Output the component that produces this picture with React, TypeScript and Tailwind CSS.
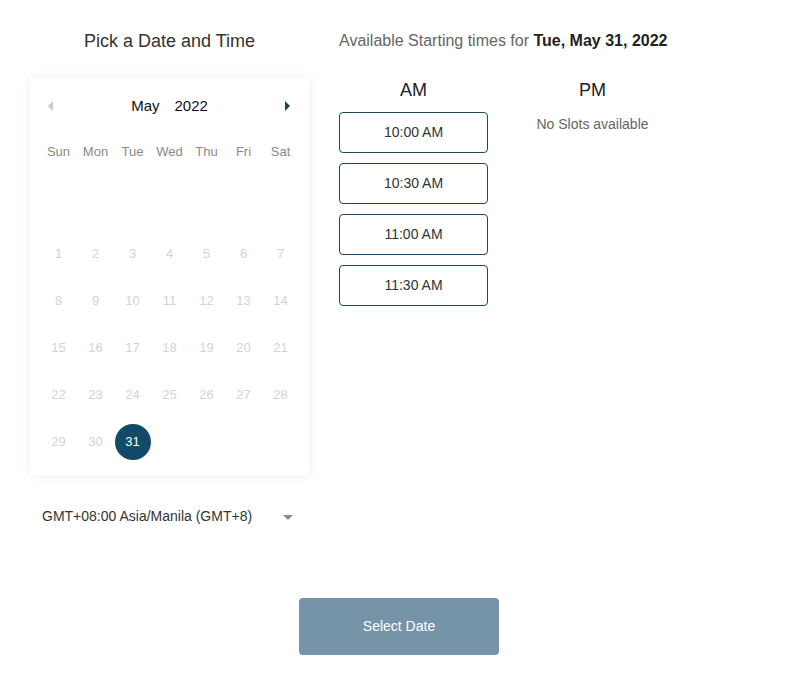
import React from 'react';

const weekdays = ['Sun', 'Mon', 'Tue', 'Wed', 'Thu', 'Fri', 'Sat'];
const amSlots = ['10:00 AM', '10:30 AM', '11:00 AM', '11:30 AM'];

// May 2022 starts on a Sunday; first row is the hidden trailing April week
const days: (number | null)[] = [
  ...Array(7).fill(null),
  ...Array.from({ length: 31 }, (_, i) => i + 1),
];

const Calendar: React.FC<{ selected: number }> = ({ selected }) => (
  <div className="bg-white shadow-[0_0_12px_rgba(0,0,0,0.07)] px-[10px] pb-[10px]">
    <div className="h-[55px] flex items-center justify-between px-[8px]">
      <svg width="6" height="10" viewBox="0 0 6 10">
        <path d="M5 0 L0 5 L5 10 Z" fill="#c8c8c8" />
      </svg>
      <div className="flex gap-[15px] pt-[2px] text-[15px] text-[#111]">
        <span>May</span>
        <span>2022</span>
      </div>
      <svg width="6" height="10" viewBox="0 0 6 10">
        <path d="M0 0 L5 5 L0 10 Z" fill="#17455e" />
      </svg>
    </div>
    <div className="grid grid-cols-7 h-[38px] mb-[12px] items-center text-[13px] text-[#8a8a8a]">
      {weekdays.map((d) => (
        <div key={d} className="text-center">
          {d}
        </div>
      ))}
    </div>
    <div className="grid grid-cols-7">
      {days.map((d, i) => (
        <div key={i} className="h-[47px] flex items-center justify-center text-[13px]">
          {d === selected ? (
            <span className="w-[36px] h-[36px] rounded-full bg-[#134a68] text-white flex items-center justify-center">
              {d}
            </span>
          ) : (
            <span className="text-[#d4d4d4]">{d}</span>
          )}
        </div>
      ))}
    </div>
  </div>
);

export default function App() {
  return (
    <div className="w-[796px] h-[691px] bg-white font-['Liberation_Sans',Arial,sans-serif]">
      <div className="flex gap-[30px] pl-[30px] pt-[29px]">
        <div className="w-[279px] flex flex-col">
          <h2 className="h-[24px] leading-[24px] text-center text-[18px] text-[#333]">
            Pick a Date and Time
          </h2>
          <div className="mt-[25px]">
            <Calendar selected={31} />
          </div>
          <div className="mt-[31px] h-[20px] flex items-center justify-between pl-[12px] pr-[16px] text-[14px] text-[#333]">
            <span>GMT+08:00 Asia/Manila (GMT+8)</span>
            <svg width="10" height="6" viewBox="0 0 10 6" className="mt-[4px]">
              <path d="M0 0 L10 0 L5 5 Z" fill="#8c8c8c" />
            </svg>
          </div>
        </div>

        <div className="flex flex-col">
          <p className="h-[24px] leading-[24px] text-[16px] text-[#666]">
            Available Starting times for <span className="font-bold text-[#222]">Tue, May 31, 2022</span>
          </p>
          <div className="mt-[25px] flex gap-[30px]">
            <div className="w-[149px] flex flex-col">
              <div className="h-[24px] leading-[24px] text-center text-[18px] text-[#222]">AM</div>
              <div className="mt-[10px] flex flex-col gap-[10px]">
                {amSlots.map((s) => (
                  <button
                    key={s}
                    className="h-[41px] border border-[#1d4a5f] rounded-[4px] text-[14px] text-[#333] bg-white"
                  >
                    {s}
                  </button>
                ))}
              </div>
            </div>
            <div className="w-[149px] flex flex-col items-center">
              <div className="h-[24px] leading-[24px] text-center text-[18px] text-[#222]">PM</div>
              <div className="mt-[12px] h-[20px] leading-[20px] text-[14px] text-[#666]">
                No Slots available
              </div>
            </div>
          </div>
        </div>
      </div>

      <div className="flex justify-center mt-[72px]">
        <button className="w-[200px] h-[57px] rounded-[4px] bg-[#7594a8] text-white text-[14px] ml-[2px]">
          Select Date
        </button>
      </div>
    </div>
  );
}
